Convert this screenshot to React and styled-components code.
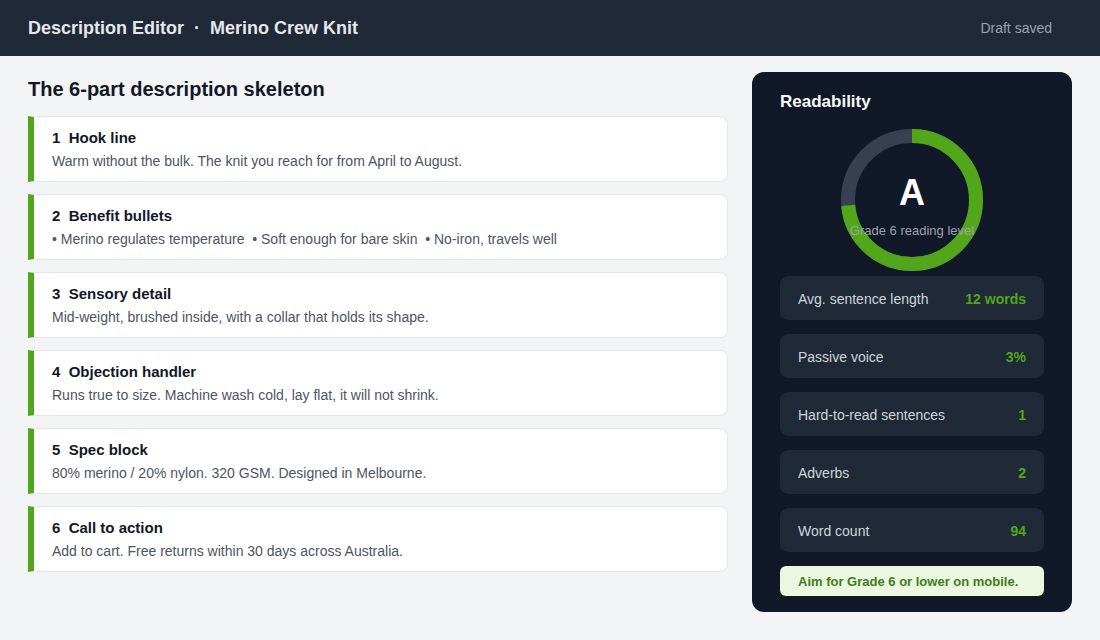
import React from "react";
import styled, { createGlobalStyle } from "styled-components";

const GREEN = "#52a61a";

const Global = createGlobalStyle`
  * { box-sizing: border-box; }
  html, body { margin: 0; padding: 0; background: #f3f4f6; }
  body { font-family: "Liberation Sans", Arial, sans-serif; }
`;

const Page = styled.div`
  width: 1100px;
  height: 640px;
  background: #f3f4f6;
  display: flex;
  flex-direction: column;
`;

const TopBar = styled.header`
  height: 56px;
  background: #1f2937;
  display: flex;
  align-items: center;
  justify-content: space-between;
  padding: 0 48px 0 28px;
  flex-shrink: 0;
`;

const AppTitle = styled.h1`
  margin: 0;
  font-size: 18px;
  font-weight: 700;
  color: #e5e7eb;
`;

const Status = styled.span`
  font-size: 14px;
  color: #9ca3af;
  margin-top: -1px;
`;

const Main = styled.main`
  display: flex;
  gap: 24px;
  padding: 16px 28px;
  align-items: flex-start;
`;

const Left = styled.section`
  width: 700px;
  display: flex;
  flex-direction: column;
`;

const Heading = styled.h2`
  margin: 5px 0 15px;
  font-size: 20px;
  line-height: 24px;
  font-weight: 700;
  color: #111827;
`;

const CardList = styled.div`
  display: flex;
  flex-direction: column;
  gap: 12px;
`;

const Card = styled.div`
  height: 66px;
  background: #fff;
  border: 1px solid #e5e7eb;
  border-left: 6px solid ${GREEN};
  border-radius: 0 8px 8px 0;
  padding: 11px 18px 10px;
  display: flex;
  flex-direction: column;
  gap: 3px;
`;

const CardTitle = styled.div`
  font-size: 15px;
  line-height: 20px;
  font-weight: 700;
  color: #111827;
  white-space: pre;
`;

const CardText = styled.div`
  font-size: 14px;
  line-height: 20px;
  color: #4b5563;
  white-space: pre;
`;

const Panel = styled.aside`
  width: 320px;
  height: 540px;
  background: #111827;
  border-radius: 12px;
  padding: 20px 28px 16px;
  display: flex;
  flex-direction: column;
`;

const PanelTitle = styled.h3`
  margin: 0;
  font-size: 17px;
  line-height: 20px;
  font-weight: 700;
  color: #f9fafb;
`;

const GaugeWrap = styled.div`
  position: relative;
  width: 144px;
  height: 144px;
  margin: 16px auto 4px;
`;

const GaugeCenter = styled.div`
  position: absolute;
  inset: 0;
  display: flex;
  flex-direction: column;
  align-items: center;
  padding-top: 45px;
`;

const Grade = styled.div`
  font-size: 36px;
  line-height: 40px;
  font-weight: 700;
  color: #ffffff;
`;

const GradeNote = styled.div`
  font-size: 13px;
  line-height: 16px;
  color: #9ca3af;
  white-space: nowrap;
  margin-top: 10px;
`;

const Stats = styled.div`
  display: flex;
  flex-direction: column;
  gap: 14px;
`;

const Stat = styled.div`
  height: 44px;
  background: #1f2937;
  border-radius: 8px;
  padding: 1px 18px 0;
  display: flex;
  align-items: center;
  justify-content: space-between;
`;

const StatLabel = styled.span`
  font-size: 14px;
  color: #d1d5db;
`;

const StatValue = styled.span`
  font-size: 14px;
  font-weight: 700;
  color: ${GREEN};
`;

const Tip = styled.div`
  margin-top: 14px;
  height: 30px;
  background: #ecf7e2;
  border-radius: 6px;
  padding: 0 18px;
  display: flex;
  align-items: center;
  font-size: 13px;
  font-weight: 700;
  color: #3f7d17;
`;

const sections = [
  { n: 1, title: "Hook line", text: "Warm without the bulk. The knit you reach for from April to August." },
  { n: 2, title: "Benefit bullets", text: "• Merino regulates temperature  • Soft enough for bare skin  • No-iron, travels well" },
  { n: 3, title: "Sensory detail", text: "Mid-weight, brushed inside, with a collar that holds its shape." },
  { n: 4, title: "Objection handler", text: "Runs true to size. Machine wash cold, lay flat, it will not shrink." },
  { n: 5, title: "Spec block", text: "80% merino / 20% nylon. 320 GSM. Designed in Melbourne." },
  { n: 6, title: "Call to action", text: "Add to cart. Free returns within 30 days across Australia." },
];

const stats = [
  ["Avg. sentence length", "12 words"],
  ["Passive voice", "3%"],
  ["Hard-to-read sentences", "1"],
  ["Adverbs", "2"],
  ["Word count", "94"],
];

function Gauge({ value }) {
  const r = 64;
  const c = 2 * Math.PI * r;
  return (
    <GaugeWrap>
      <svg width="144" height="144" viewBox="0 0 144 144">
        <circle cx="72" cy="72" r={r} fill="none" stroke="#374151" strokeWidth="14" />
        <circle
          cx="72"
          cy="72"
          r={r}
          fill="none"
          stroke={GREEN}
          strokeWidth="14"
          strokeDasharray={`${c * value} ${c}`}
          transform="rotate(-90 72 72)"
        />
      </svg>
      <GaugeCenter>
        <Grade>A</Grade>
        <GradeNote>Grade 6 reading level</GradeNote>
      </GaugeCenter>
    </GaugeWrap>
  );
}

export default function App() {
  return (
    <Page>
      <Global />
      <TopBar>
        <AppTitle>Description Editor&nbsp; · &nbsp;Merino Crew Knit</AppTitle>
        <Status>Draft saved</Status>
      </TopBar>
      <Main>
        <Left>
          <Heading>The 6-part description skeleton</Heading>
          <CardList>
            {sections.map((s) => (
              <Card key={s.n}>
                <CardTitle>{`${s.n}  ${s.title}`}</CardTitle>
                <CardText>{s.text}</CardText>
              </Card>
            ))}
          </CardList>
        </Left>
        <Panel>
          <PanelTitle>Readability</PanelTitle>
          <Gauge value={0.735} />
          <Stats>
            {stats.map(([l, v]) => (
              <Stat key={l}>
                <StatLabel>{l}</StatLabel>
                <StatValue>{v}</StatValue>
              </Stat>
            ))}
          </Stats>
          <Tip>Aim for Grade 6 or lower on mobile.</Tip>
        </Panel>
      </Main>
    </Page>
  );
}
